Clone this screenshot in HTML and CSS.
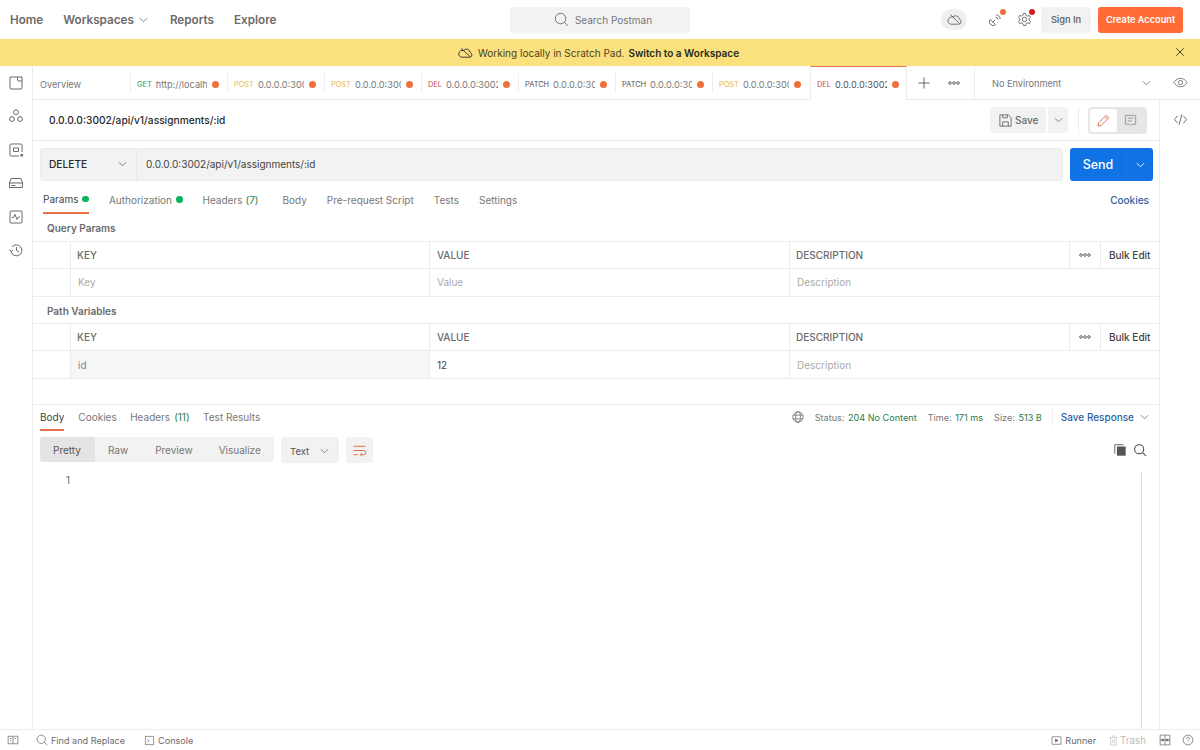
FILE: index.html
```html
<!DOCTYPE html>
<html lang="en">
<head>
<meta charset="utf-8">
<title>Postman</title>
<link rel="stylesheet" href="styles.css">
</head>
<body>
<header class="topbar">
  <nav class="topnav">
    <a class="home">Home</a>
    <a class="workspaces">Workspaces <svg class="chev" viewBox="0 0 10 6"><path d="M1 1l4 4 4-4"/></svg></a>
    <a class="reports">Reports</a>
    <a>Explore</a>
  </nav>
  <div class="search">
    <svg class="ico15" viewBox="0 0 16 16"><circle cx="7" cy="7" r="5.600"/><path d="M11.200 11.200l3.600 3.600"/></svg>
    <span>Search Postman</span>
  </div>
  <div class="topright">
    <span class="cloudpill"><svg class="ico15" viewBox="0 0 16 16"><path d="M4 13h8.500a2.700 2.700 0 0 0 .6-5.300A4 4 0 0 0 6 5.500 3.600 3.600 0 0 0 4 13zM3.500 2.500l10 10"/></svg></span>
    <span class="iconbadge sat"><svg class="ico15" viewBox="0 0 16 16"><path d="M2.500 8l5.500 5.500a3.900 3.900 0 0 1-5.500-5.500zM5 11l2.600-2.600M8 5.500a2.500 2.500 0 0 1 2.500 2.500M8.500 3a4.500 4.500 0 0 1 4.500 4.500"/></svg><i class="badge orange"></i></span>
    <span class="iconbadge gear"><svg class="ico15" viewBox="0 0 16 16"><circle cx="8" cy="8" r="2.400"/><path d="M6.800 1.500h2.400l.4 2 1.600.9 2-.7 1.200 2-1.500 1.400v1.800l1.500 1.400-1.200 2-2-.7-1.600.9-.4 2H6.800l-.4-2-1.600-.9-2 .7-1.200-2 1.500-1.400V7.100L1.600 5.700l1.200-2 2 .7 1.600-.9z"/></svg><i class="badge red"></i></span>
    <button class="signin">Sign In</button>
    <button class="create">Create Account</button>
  </div>
</header>
<div class="banner">
  <svg class="ico15 bannerico" viewBox="0 0 16 16"><path d="M3.500 13h9a2.500 2.500 0 0 0 .5-4.900A4 4 0 0 0 5.800 6 3.600 3.600 0 0 0 3.500 13zM3.500 3.500L13 12.500"/></svg>
  <span>Working locally in Scratch Pad.</span>
  <b>Switch to a Workspace</b>
  <svg class="bannerclose" viewBox="0 0 12 12"><path d="M1.500 1.500l9 9M10.500 1.500l-9 9"/></svg>
</div>
<div class="shell">
  <aside class="sidebar">
    <svg class="side" viewBox="0 0 16 16"><path d="M2 2h12v11a1 1 0 0 1-1 1H3a1 1 0 0 1-1-1zM9.500 2v3a1 1 0 0 0 1 1H14"/></svg>
    <svg class="side" viewBox="0 0 16 16"><circle cx="8" cy="4.200" r="2.400"/><circle cx="4" cy="11" r="2.400"/><circle cx="12" cy="11" r="2.400"/></svg>
    <svg class="side" viewBox="0 0 16 16"><path d="M14 10V3a1 1 0 0 0-1-1H3a1 1 0 0 0-1 1v10a1 1 0 0 0 1 1h8M5.500 6h5v3.500h-5z"/><rect class="fillic" x="12.500" y="12" width="2.500" height="2.500"/></svg>
    <svg class="side" viewBox="0 0 16 16"><path d="M1.500 8l1.500-4.500h10L14.500 8v4.500h-13zM1.500 8h13M3.500 10.500h4M12 10.500h.5"/></svg>
    <svg class="side" viewBox="0 0 16 16"><rect x="2" y="2" width="12" height="12" rx="1"/><path d="M4 8.500h1.500l1.500-3 2 5 1.500-2.500H12"/></svg>
    <svg class="side" viewBox="0 0 16 16"><path d="M3 9.500a5.500 5.500 0 1 0 1-4.500M1.500 7.500L3 9.500 5 8M8.500 5v3.500l2.500 1.500"/></svg>
  </aside>
  <main class="workspace">
    <div class="tabstrip">
      <div class="overview">Overview</div>
      <div class="rtab"><span class="m get">GET</span><span class="u">http://localh</span><i class="dot"></i></div>
      <div class="rtab"><span class="m post">POST</span><span class="u">0.0.0.0:3002</span><i class="dot"></i></div>
      <div class="rtab"><span class="m post">POST</span><span class="u">0.0.0.0:3002</span><i class="dot"></i></div>
      <div class="rtab"><span class="m del">DEL</span><span class="u">0.0.0.0:3002</span><i class="dot"></i></div>
      <div class="rtab"><span class="m patch">PATCH</span><span class="u">0.0.0.0:30</span><i class="dot"></i></div>
      <div class="rtab"><span class="m patch">PATCH</span><span class="u">0.0.0.0:30</span><i class="dot"></i></div>
      <div class="rtab"><span class="m post">POST</span><span class="u">0.0.0.0:3002</span><i class="dot"></i></div>
      <div class="rtab active"><span class="m del">DEL</span><span class="u">0.0.0.0:3002</span><i class="dot"></i></div>
      <div class="tabtools">
        <svg class="plus" viewBox="0 0 12 12"><path d="M6 .5v11M.5 6h11"/></svg>
        <svg class="more" viewBox="0 0 12 4"><circle cx="2" cy="2" r="1.300"/><circle cx="6" cy="2" r="1.300"/><circle cx="10" cy="2" r="1.300"/></svg>
      </div>
      <div class="envsel"><span>No Environment</span><svg class="chev" viewBox="0 0 10 6"><path d="M1 1l4 4 4-4"/></svg></div>
      <div class="eye"><svg class="ico15" viewBox="0 0 16 16"><path d="M1 8c1.800-3 4.200-4.500 7-4.500S13.200 5 15 8c-1.800 3-4.200 4.500-7 4.500S2.800 11 1 8z"/><circle cx="8" cy="8" r="2.300"/></svg></div>
    </div>
    <div class="body">
      <div class="center">
        <div class="reqname">
          <span class="reqtitle">0.0.0.0:3002/api/v1/assignments/:id</span>
          <div class="savegroup">
            <button class="save"><svg class="ico15" viewBox="0 0 16 16"><path d="M2 2h9l3 3v9H2zM5 14V9.500h6V14M5 2v3h5V2"/></svg><span>Save</span></button>
            <button class="savechev"><svg class="chev" viewBox="0 0 10 6"><path d="M1 1l4 4 4-4"/></svg></button>
          </div>
          <div class="modes">
            <span class="mode on"><svg class="ico15 pencil" viewBox="0 0 16 16"><path d="M2 14l.8-3.500L11 2.300l2.700 2.700-8.200 8.200zM9.500 3.800l2.700 2.700"/></svg></span>
            <span class="mode"><svg class="ico15" viewBox="0 0 16 16"><path d="M2.500 2.500h11v9.500H9.500L8 13.500 6.500 12h-4zM5 5.500h6M5 8.500h4.500"/></svg></span>
          </div>
        </div>
        <div class="urlrow">
          <div class="urlbox">
            <div class="method"><span>DELETE</span><svg class="chev" viewBox="0 0 10 6"><path d="M1 1l4 4 4-4"/></svg></div>
            <div class="url">0.0.0.0:3002/api/v1/assignments/:id</div>
          </div>
          <div class="send"><span class="sendl">Send</span><span class="sendc"><svg class="chev" viewBox="0 0 10 6"><path d="M1 1l4 4 4-4"/></svg></span></div>
        </div>
        <div class="reqtabs">
          <a class="rqt on">Params<i class="gdot"></i></a>
          <a class="rqt auth">Authorization<i class="gdot"></i></a>
          <a class="rqt hdr">Headers <em>(7)</em></a>
          <a class="rqt body-t">Body</a>
          <a class="rqt">Pre-request Script</a>
          <a class="rqt">Tests</a>
          <a class="rqt">Settings</a>
          <a class="cookies">Cookies</a>
        </div>
        <h4 class="sect q">Query Params</h4>
        <div class="table">
          <div class="tr thead"><div class="c0"></div><div class="c1">KEY</div><div class="c2">VALUE</div><div class="c3">DESCRIPTION</div><div class="c4"><svg class="more" viewBox="0 0 12 4"><circle cx="2" cy="2" r="1.300"/><circle cx="6" cy="2" r="1.300"/><circle cx="10" cy="2" r="1.300"/></svg></div><div class="c5">Bulk Edit</div></div>
          <div class="tr ph"><div class="c0"></div><div class="c1">Key</div><div class="c2">Value</div><div class="c3 wide">Description</div></div>
        </div>
        <h4 class="sect p">Path Variables</h4>
        <div class="table">
          <div class="tr thead"><div class="c0"></div><div class="c1">KEY</div><div class="c2">VALUE</div><div class="c3">DESCRIPTION</div><div class="c4"><svg class="more" viewBox="0 0 12 4"><circle cx="2" cy="2" r="1.300"/><circle cx="6" cy="2" r="1.300"/><circle cx="10" cy="2" r="1.300"/></svg></div><div class="c5">Bulk Edit</div></div>
          <div class="tr vals"><div class="c0"></div><div class="c1 keyro">id</div><div class="c2 val">12</div><div class="c3 wide phc">Description</div></div>
        </div>
        <section class="response">
          <div class="resphead">
            <a class="rst on">Body</a>
            <a class="rst">Cookies</a>
            <a class="rst">Headers <em>(11)</em></a>
            <a class="rst">Test Results</a>
            <div class="respmeta">
              <svg class="globe" viewBox="0 0 16 16"><circle cx="8" cy="8" r="7"/><ellipse cx="8" cy="8" rx="3.200" ry="7"/><path d="M1.500 5.500h13M1.500 10.500h13"/></svg>
              <span class="st">Status: <em>204 No Content</em></span>
              <span class="st">Time: <em>171 ms</em></span>
              <span class="st">Size: <em>513 B</em></span>
              <span class="saveresp">Save Response<svg class="chev" viewBox="0 0 10 6"><path d="M1 1l4 4 4-4"/></svg></span>
            </div>
          </div>
          <div class="viewrow">
            <div class="seg"><span class="s on">Pretty</span><span class="s">Raw</span><span class="s">Preview</span><span class="s">Visualize</span></div>
            <div class="fmt"><span>Text</span><svg class="chev" viewBox="0 0 10 6"><path d="M1 1l4 4 4-4"/></svg></div>
            <div class="wrap"><svg class="ico15" viewBox="0 0 16 16"><path d="M1.500 3.500h13M1.500 8h11a2.200 2.200 0 0 1 0 4.500H9M10.800 10.700L9 12.500l1.800 1.800M1.500 12.500h4.500"/></svg></div>
            <div class="viewtools">
              <svg class="ico14 copy" viewBox="0 0 16 16"><path class="fillic" d="M4.500 4h10v10.500h-10z"/><path d="M2 12V2h10"/></svg>
              <svg class="ico14 find" viewBox="0 0 16 16"><circle cx="7" cy="7" r="5.200"/><path d="M11 11l3.800 3.800"/></svg>
            </div>
          </div>
          <div class="editor">
            <div class="ln">1</div>
            <div class="scroll"></div>
          </div>
        </section>
      </div>
      <div class="rail"><svg class="ico15" viewBox="0 0 16 16"><path d="M5 4L1.500 8 5 12M11 4l3.500 4-3.500 4M9.500 2.500l-3 11"/></svg></div>
    </div>
  </main>
</div>
<footer class="statusbar">
  <svg class="ico13 f1" viewBox="0 0 16 16"><path d="M1.500 3h13v10h-13zM8 3v10M4 6h2M4 9h2M10 6h2"/></svg>
  <span class="fi"><svg class="ico13" viewBox="0 0 16 16"><circle cx="7" cy="7" r="5.500"/><path d="M11 11l4 4"/></svg>Find and Replace</span>
  <span class="fi"><svg class="ico11" viewBox="0 0 16 16"><path d="M2 2h12v12H2zM5 6l2.500 2.500L5 11"/></svg>Console</span>
  <span class="fright">
    <span class="fi runner"><svg class="ico11" viewBox="0 0 16 16"><path d="M1.500 2.500h13v11h-13z"/><path class="fillic" d="M6 5l5 3-5 3z"/></svg>Runner</span>
    <span class="fi trash"><svg class="ico11" viewBox="0 0 16 16"><path d="M2.500 3.500h11M4 3.500V14.500h8V3.500M6 1.500h4M6.500 6v6M9.500 6v6"/></svg>Trash</span>
    <svg class="ico13 grid" viewBox="0 0 16 16"><path d="M1.500 1.500h13v13h-13zM8 1.500v13M1.500 8h13"/><rect class="fillic" x="3.500" y="6.500" width="3" height="3"/><rect class="fillic" x="9.500" y="6.500" width="3" height="3"/></svg>
    <svg class="ico13" viewBox="0 0 16 16"><circle cx="8" cy="8" r="6.500"/><path d="M6 6.300a2 2 0 1 1 3 1.700c-.7.400-1 .8-1 1.500M8 11.500v.5"/></svg>
  </span>
</footer>
</body>
</html>
```
FILE: styles.css
```css
* { box-sizing: border-box; }
html, body { margin: 0; height: 100%; }
body { width: 1200px; height: 750px; overflow: hidden; background: #fff; font-family: Inter, "Liberation Sans", sans-serif; color: #6b6b6b; display: flex; flex-direction: column; font-size: 11px; }
svg { fill: none; stroke: currentColor; stroke-width: 1; flex: none; }
.ico15 { width: 15px; height: 15px; }
.ico14 { width: 14px; height: 14px; }
.ico13 { width: 12px; height: 12px; }
.ico11 { width: 11px; height: 11px; }
.chev { width: 9px; height: 6px; color: #777; }
.fillic { fill: currentColor; stroke: none; }
em { font-style: normal; }
i { display: block; }

.topbar { height: 39px; flex: none; display: flex; align-items: center; position: relative; padding-left: 10px; }
.topnav { display: flex; align-items: center; font-size: 11.700px; font-weight: 600; color: #6b6b6b; width: 500px; }
.home { margin-right: 20px; }
.workspaces { margin-right: 22px; display: flex; align-items: center; gap: 5px; }
.reports { margin-right: 20px; }
.search { width: 180px; height: 26px; background: #f2f2f2; border-radius: 3px; display: flex; align-items: center; justify-content: center; gap: 6px; font-size: 10px; color: #777; padding-left: 6px; }
.search svg { color: #6b6b6b; }
.topright { margin-left: auto; display: flex; align-items: center; padding-right: 17px; color: #6b6b6b; }
.cloudpill { width: 26px; height: 21px; border-radius: 11px; background: #efefef; display: flex; align-items: center; justify-content: center; margin-right: 21px; }
.iconbadge { position: relative; display: flex; margin-right: 14px; }
.gear { margin-right: 9px; }
.badge { position: absolute; width: 6px; height: 6px; border-radius: 50%; top: -3px; right: -3px; }
.orange { background: #f0703c; }
.red { background: #cc1f1f; }
button { font-family: inherit; border: 0; }
.signin { width: 50px; height: 26px; border-radius: 3px; background: #f2f2f2; color: #6b6b6b; font-size: 9.200px; font-weight: 600; margin-right: 7px; padding: 0; }
.create { width: 85px; height: 26px; border-radius: 3px; background: #ff6c37; color: #fff; font-size: 9.200px; font-weight: 600; padding: 0; }

.banner { height: 27px; flex: none; background: #fbe17e; display: flex; align-items: center; justify-content: center; color: #4a4320; font-size: 10px; position: relative; padding-right: 3px; }
.bannerico { margin-right: 5px; color: #333; }
.banner b { font-weight: 600; color: #2a2a1a; margin-left: 4px; }
.bannerclose { position: absolute; right: 15px; top: 8px; width: 10px; height: 10px; color: #222; }

.shell { flex: 1; display: flex; min-height: 0; }
.sidebar { width: 33px; flex: none; border-right: 1px solid #ededed; display: flex; flex-direction: column; align-items: center; padding-top: 9px; padding-right: 1px; gap: 17.400px; color: #6b6b6b; }
.side { width: 16px; height: 16px; }
.workspace { flex: 1; display: flex; flex-direction: column; min-width: 0; }

.tabstrip { height: 34px; flex: none; display: flex; align-items: stretch; border-bottom: 1px solid #e8e8e8; }
.overview { width: 97px; display: flex; align-items: center; padding: 3px 0 0 7px; font-size: 9.200px; color: #777; }
.rtab { width: 97px; position: relative; display: flex; align-items: center; padding: 3px 0 0 7px; }
.rtab::before { content: ""; position: absolute; left: 0; top: 7px; bottom: 7px; border-left: 1px solid #eee; }
.m { font-size: 7.400px; margin-right: 4px; flex: none; }
.get { color: #1f9e62; }
.post { color: #e8b948; }
.del { color: #c84a4a; }
.patch { color: #555; }
.u { font-size: 9.200px; color: #777; overflow: hidden; white-space: nowrap; flex: 1; min-width: 0; }
.dot { width: 7px; height: 7px; border-radius: 50%; background: #f0703c; flex: none; margin: 0 8px 0 5px; }
.rtab.active { border-top: 1px solid #e8734a; border-left: 1px solid #ececec; border-right: 1px solid #ececec; border-bottom: 1px solid #fff; margin: 0 0 -1px 1px; padding-top: 2px; padding-left: 6px; width: 97px; }
.rtab.active::before { display: none; }
.rtab.active .u { color: #555; }
.rtab.active .dot { margin-right: 7px; }
.tabtools { width: 68px; display: flex; align-items: center; padding-left: 11px; gap: 18px; color: #666; border-right: 1px solid #eee; }
.plus { width: 12px; height: 12px; }
.more { width: 12px; height: 4px; color: #666; }
.envsel { width: 185px; display: flex; align-items: center; justify-content: space-between; padding: 1px 9px 0 17px; font-size: 9.200px; color: #777; }
.eye { width: 40px; display: flex; align-items: center; justify-content: center; color: #777; }

.body { flex: 1; display: flex; min-height: 0; }
.center { flex: 1; min-width: 0; border-right: 1px solid #ededed; display: flex; flex-direction: column; }
.rail { width: 40px; flex: none; display: flex; justify-content: center; padding-top: 12px; color: #666; }

.reqname { height: 41px; flex: none; display: flex; align-items: center; border-bottom: 1px solid #e8e8e8; padding: 0 12px 0 16px; }
.reqtitle { font-size: 10.200px; font-weight: 500; color: #2a2a2a; margin-right: auto; }
.savegroup { display: flex; gap: 2px; }
.save { width: 56px; height: 26px; background: #f2f2f2; border-radius: 3px 0 0 3px; color: #6b6b6b; font-size: 10px; font-weight: 500; display: flex; align-items: center; gap: 2px; padding: 0 0 0 8px; }
.save span { margin-top: -1px; }
.savechev { width: 20px; height: 26px; background: #f2f2f2; border-radius: 0 3px 3px 0; display: flex; align-items: center; justify-content: center; padding: 0; }
.modes { margin-left: 20px; padding: 2px; background: #e6e6e6; border-radius: 4px; width: 59px; height: 27px; display: flex; position: relative; }
.modes::before { content: ""; position: absolute; left: -10px; top: 0; bottom: 0; border-left: 1px solid #eee; }
.mode { width: 27px; display: flex; align-items: center; justify-content: center; color: #999; }
.mode.on { background: #fff; border-radius: 3px; }
.pencil { color: #d9704a; }

.urlrow { flex: none; display: flex; padding: 7px 6px 0 7px; height: 40px; }
.urlbox { flex: 1; height: 33px; background: #f2f2f2; border-radius: 3px; display: flex; align-items: stretch; border: 1px solid #ececec; }
.method { width: 96px; border-right: 1px solid #e8e8e8; display: flex; align-items: center; justify-content: space-between; padding: 0 9px 1px 8px; font-size: 10.200px; font-weight: 500; color: #2a2a2a; }
.url { flex: 1; display: flex; align-items: center; padding: 0 0 2px 9px; font-size: 10px; color: #444; }
.send { width: 83px; height: 33px; margin-left: 7px; background: #0f72e5; border-radius: 3px; color: #fff; display: flex; }
.sendl { flex: 1; display: flex; align-items: center; justify-content: center; font-size: 12.500px; font-weight: 500; }
.sendc { width: 27px; display: flex; align-items: center; justify-content: center; border-left: 1px solid #1a78e5; }
.sendc .chev { color: #fff; }

.reqtabs { height: 33px; flex: none; display: flex; font-size: 10px; color: #777; padding: 0 10px 0 10px; }
.rqt { display: flex; align-items: center; height: 33px; padding: 5px 0 1px; margin-right: 20px; }
.rqt.on { color: #444; border-bottom: 2px solid #e8734a; padding: 5px 0 0; margin-right: 20px; }
.gdot { width: 6.500px; height: 6.500px; border-radius: 50%; background: #0cb35a; margin-left: 4px; }
.hdr em { color: #2c7a4b; margin-left: 3px; }
.hdr { margin-right: 24px; }
.cookies { margin-left: auto; align-self: center; color: #2c5f9e; font-weight: 500; padding-top: 5px; }
.sect { margin: 0; font-size: 10px; font-weight: 600; color: #6b6b6b; padding-left: 14px; }
.sect.q { height: 27px; padding-top: 8px; }
.sect.p { height: 26px; padding-top: 8px; }
.table { flex: none; }
.tr { display: flex; height: 28px; border-bottom: 1px solid #ececec; font-size: 10px; }
.thead { border-top: 1px solid #ececec; background: #fff; font-weight: 500; color: #6b6b6b; }
.tr > div { display: flex; align-items: center; padding-left: 7px; }
.c0 { width: 38px; border-right: 1px solid #ececec; }
.c1 { width: 359px; border-right: 1px solid #ececec; }
.c2 { width: 360px; border-right: 1px solid #ececec; }
.c3 { width: 280px; border-right: 1px solid #ececec; }
.c3.wide { flex: 1; border-right: 0; }
.thead > .c1, .thead > .c3 { padding-left: 6px; }
.tr .c4 { width: 31px; border-right: 1px solid #ececec; justify-content: center; padding: 0; }
.tr .c5 { flex: 1; padding-left: 8px; color: #444; }
.ph { color: #aaa; }
.ph > div { padding-bottom: 2px; }
.keyro { background: #f6f6f6; color: #888; }
.val { color: #444; }
.phc { color: #aaa; }
.vals .c0 { background: #fff; }

.response { flex: 1; min-height: 0; margin-top: 25px; border-top: 1px solid #ececec; display: flex; flex-direction: column; }
.resphead { height: 27px; flex: none; display: flex; align-items: flex-start; font-size: 10px; color: #777; padding-left: 7px; }
.rst { margin-right: 13.500px; height: 26px; display: flex; align-items: center; padding-bottom: 2px; }
.rst.on { color: #444; padding-bottom: 0; border-bottom: 2px solid #e8734a; margin-right: 14px; }
.rst em { color: #2c7a4b; margin-left: 4px; }
.respmeta { margin-left: auto; display: flex; align-items: center; height: 24px; font-size: 9.100px; padding-right: 10px; }
.globe { width: 12px; height: 12px; margin-right: 11px; color: #666; }
.st { margin-right: 11px; }
.st:nth-of-type(3) { margin-right: 10px; }
.st em { color: #2c7a4b; margin-left: 1px; }
.saveresp { color: #2c5f9e; font-weight: 500; font-size: 10px; display: flex; align-items: center; gap: 6px; border-left: 1px solid #eee; padding-left: 8px; height: 18px; }
.viewrow { height: 26px; margin-top: 5px; flex: none; display: flex; align-items: stretch; padding-left: 7px; font-size: 10px; }
.seg { width: 234px; background: #f2f2f2; border-radius: 3px; display: flex; height: 25px; overflow: hidden; color: #777; }
.s { display: flex; align-items: center; padding: 0 13px; }
.s:nth-child(1), .s:nth-child(2) { padding-right: 14px; }
.s.on { background: #e4e4e4; color: #555; }
.fmt { width: 58px; margin-left: 7px; background: #f2f2f2; border-radius: 3px; display: flex; align-items: center; justify-content: space-between; padding: 2px 10px 0 9px; font-size: 9.500px; color: #555; }
.wrap { width: 27px; margin-left: 7px; background: #f2f2f2; border-radius: 3px; display: flex; align-items: center; justify-content: center; color: #e4693a; }
.viewtools { margin-left: auto; display: flex; align-items: center; gap: 6px; padding-right: 12px; color: #555; }
.find { stroke-width: 1.300; }
.editor { flex: 1; min-height: 0; display: flex; margin-top: 8px; position: relative; }
.ln { width: 37px; text-align: right; font-size: 10.500px; color: #4e8a78; padding-top: 3px; }
.scroll { position: absolute; right: 17px; top: 1px; bottom: 0; width: 1px; background: #dcdcdc; }

.statusbar { height: 21px; flex: none; border-top: 1px solid #ececec; display: flex; align-items: center; padding: 0 6px 0 7px; font-size: 9.100px; color: #6b6b6b; }
.f1 { margin-right: 17px; }
.fi { display: flex; align-items: center; gap: 3px; margin-right: 19px; }
.fright { margin-left: auto; display: flex; align-items: center; }
.fright .fi { margin-right: 13px; }
.fright .runner { margin-right: 12px; }
.trash { color: #bbb; font-size: 9.800px; gap: 1px; }
.grid { margin-right: 11px; }
```
